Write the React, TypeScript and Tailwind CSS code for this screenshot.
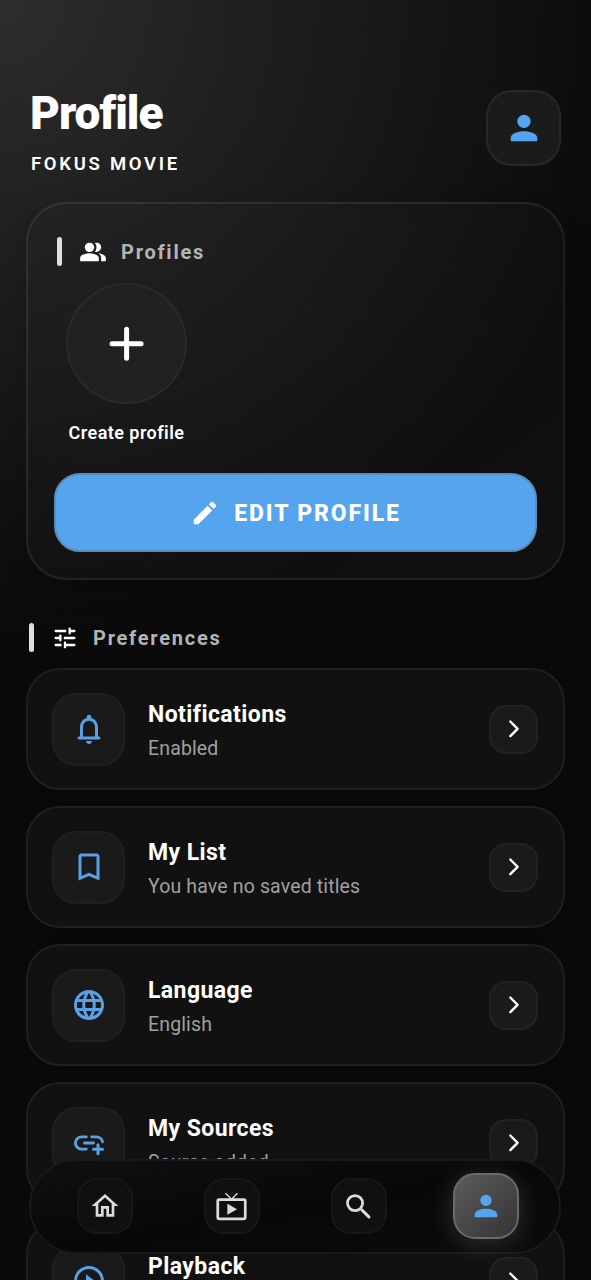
import type { ReactNode } from 'react'
import { MdLanguage, MdLiveTv, MdOutlineHome, MdPlayCircleOutline } from 'react-icons/md'

type IconProps = { className?: string }

function PersonIcon({ className }: IconProps) {
  return (
    <svg viewBox="0 0 24 24" fill="currentColor" className={className}>
      <path d="M12 12c2.21 0 4-1.79 4-4s-1.79-4-4-4-4 1.79-4 4 1.79 4 4 4zm0 2c-3.6 0-8 1.2-8 4.2v1.2c0 .33.27.6.6.6h14.8c.33 0 .6-.27.6-.6v-1.2c0-3-4.4-4.2-8-4.2z" />
    </svg>
  )
}

function PeopleIcon({ className }: IconProps) {
  return (
    <svg viewBox="0 0 24 24" fill="currentColor" className={className}>
      <circle cx="9" cy="8" r="4" />
      <path d="M9 13c-2.67 0-8 1.34-8 4v2.2c0 .44.36.8.8.8h14.4c.44 0 .8-.36.8-.8V17c0-2.66-5.33-4-8-4z" />
      <path d="M15 12c2.21 0 4-1.79 4-4s-1.79-4-4-4c-.47 0-.91.1-1.33.24C14.5 5.27 15 6.58 15 8s-.5 2.73-1.33 3.76c.42.14.86.24 1.33.24z" />
      <path d="M16.67 13.13C18.04 14.06 19 15.32 19 17v3h3.2c.44 0 .8-.36.8-.8V17c0-2.18-3.57-3.47-6.33-3.87z" />
    </svg>
  )
}

function EditIcon({ className }: IconProps) {
  return (
    <svg viewBox="0 0 24 24" fill="currentColor" className={className}>
      <path d="M3 17.46v3.04c0 .28.22.5.5.5h3.04c.13 0 .26-.05.35-.15L17.81 9.94l-3.75-3.75L3.15 17.1c-.1.1-.15.22-.15.36zM20.71 7.04a.996.996 0 0 0 0-1.41l-2.34-2.34a.996.996 0 0 0-1.41 0l-1.83 1.83 3.75 3.75 1.83-1.83z" />
    </svg>
  )
}

function TuneIcon({ className }: IconProps) {
  return (
    <svg viewBox="0 0 24 24" fill="currentColor" className={className}>
      <path d="M3 18c0 .55.45 1 1 1h5v-2H4c-.55 0-1 .45-1 1zM3 6c0 .55.45 1 1 1h9V5H4c-.55 0-1 .45-1 1zm10 14v-1h7c.55 0 1-.45 1-1s-.45-1-1-1h-7v-1c0-.55-.45-1-1-1s-1 .45-1 1v4c0 .55.45 1 1 1s1-.45 1-1zM7 10v1H4c-.55 0-1 .45-1 1s.45 1 1 1h3v1c0 .55.45 1 1 1s1-.45 1-1v-4c0-.55-.45-1-1-1s-1 .45-1 1zm14 2c0-.55-.45-1-1-1h-9v2h9c.55 0 1-.45 1-1zm-5-3c.55 0 1-.45 1-1V7h3c.55 0 1-.45 1-1s-.45-1-1-1h-3V4c0-.55-.45-1-1-1s-1 .45-1 1v4c0 .55.45 1 1 1z" />
    </svg>
  )
}

function BellIcon({ className }: IconProps) {
  return (
    <svg viewBox="0 0 24 24" fill="currentColor" className={className}>
      <path d="M18.6 17H18v-6c0-3.07-1.63-5.64-4.5-6.32V4c0-.83-.67-1.5-1.5-1.5s-1.5.67-1.5 1.5v.68C7.64 5.36 6 7.92 6 11v6h-.6c-1.33 0-1.33 2 0 2h13.2c1.33 0 1.33-2 0-2zM16 17H8v-6c0-2.48 1.51-4.5 4-4.5s4 2.02 4 4.5v6zm-4 5c1.1 0 2-.9 2-2h-4c0 1.1.89 2 2 2z" />
    </svg>
  )
}

function BookmarkIcon({ className }: IconProps) {
  return (
    <svg viewBox="0 0 24 24" fill="currentColor" className={className}>
      <path d="M17 3H7c-1.1 0-2 .9-2 2v16l7-3 7 3V5c0-1.1-.9-2-2-2zm0 15l-5-2.18L7 18V5h10v13z" />
    </svg>
  )
}

function AddLinkIcon({ className }: IconProps) {
  return (
    <svg viewBox="0 0 24 24" fill="none" stroke="currentColor" strokeWidth="1.9" strokeLinecap="round" className={className}>
      <path d="M10.2 7.95H7a4.05 4.05 0 0 0 0 8.1h3.2M13.8 7.95H17A4.05 4.05 0 0 1 21 11.2M9 12h6" />
      <path d="M18 13.2v6M15 16.1h6" strokeWidth="2" />
    </svg>
  )
}

function SearchIcon({ className }: IconProps) {
  return (
    <svg viewBox="0 0 24 24" fill="none" stroke="currentColor" strokeWidth="2" className={className}>
      <circle cx="9.5" cy="9.5" r="5.5" />
      <path d="M14.6 14.6l5 5" strokeWidth="2.2" strokeLinecap="round" />
    </svg>
  )
}

function ChevronIcon() {
  return (
    <svg viewBox="0 0 20 20" className="h-5 w-5" fill="none" stroke="#fff" strokeWidth="2.4" strokeLinecap="round" strokeLinejoin="round">
      <path d="M6.3 2.5l7.3 7.3-7.3 7.3" />
    </svg>
  )
}

function SectionTitle({ icon, children }: { icon: ReactNode; children: ReactNode }) {
  return (
    <div className="flex h-[30px] items-center">
      <span className="mb-px h-[29px] w-[5px] rounded-full bg-[#dedede]" />
      <span className="ml-[17px] text-white">{icon}</span>
      <h2 className="ml-[14px] text-[20px] leading-none font-bold tracking-[1.75px] text-[#b4b4b4]">{children}</h2>
    </div>
  )
}

const preferences = [
  { title: 'Notifications', subtitle: 'Enabled', icon: <BellIcon className="h-9 w-9" /> },
  { title: 'My List', subtitle: 'You have no saved titles', icon: <BookmarkIcon className="h-9 w-9" /> },
  { title: 'Language', subtitle: 'English', icon: <MdLanguage className="h-9 w-9" /> },
  { title: 'My Sources', subtitle: 'Source added', icon: <AddLinkIcon className="h-9 w-9" /> },
  { title: 'Playback', subtitle: '', icon: <MdPlayCircleOutline className="h-9 w-9" /> },
]

function PreferenceRow({ title, subtitle, icon }: (typeof preferences)[number]) {
  return (
    <button className="flex h-[122px] w-full shrink-0 items-center rounded-[34px] border-2 border-white/[0.06] bg-[#111111] pr-[25px] pl-6 text-left shadow-[0_6px_14px_rgba(0,0,0,0.2)]">
      <span className="flex h-[73px] w-[73px] items-center justify-center rounded-[24px] border-2 border-white/[0.025] bg-[#1a1a1a] text-[#5aa0e6]">
        {icon}
      </span>
      <span className="ml-[23px] flex flex-1 flex-col gap-[7px] pt-[5px]">
        <span className="text-[23px] leading-[27px] font-bold tracking-[0.42px] text-white">{title}</span>
        <span className="h-[27px] text-[19.5px] leading-[27px] tracking-[0.14px] text-[#a0a0a0]">{subtitle}</span>
      </span>
      <span className="flex h-[49px] w-[49px] items-center justify-center rounded-[17px] border-2 border-white/[0.04] bg-[#1a1a1a]">
        <ChevronIcon />
      </span>
    </button>
  )
}

function NavButton({ children }: { children: ReactNode }) {
  return (
    <div className="flex flex-1 justify-center">
      <button className="flex h-14 w-14 items-center justify-center rounded-[20px] border-2 border-white/[0.03] bg-[#101010] text-[#dcdcdc]">
        {children}
      </button>
    </div>
  )
}

export default function App() {
  return (
    <div className="relative h-[1280px] w-[591px] overflow-hidden bg-[#090909] bg-[radial-gradient(ellipse_640px_640px_at_0_0,#2d2d2d_0%,#1e1e1e_42%,#0a0a0a_100%)] font-[Roboto,sans-serif]">
      <header className="flex justify-between pt-[90px] pr-[30px] pl-[31px]">
        <div>
          <h1 className="-ml-px text-[46px] leading-[46px] font-black tracking-[-1px] text-white">Profile</h1>
          <p className="mt-[18px] text-[18.5px] leading-[20px] font-semibold tracking-[2.7px] text-white">FOKUS MOVIE</p>
        </div>
        <button className="flex h-[76px] w-[75px] items-center justify-center rounded-[26px] border-2 border-white/[0.06] bg-[#1b1b1b] text-[#55a4ee]">
          <PersonIcon className="h-10 w-10" />
        </button>
      </header>

      <section className="mx-[26px] mt-[28px] flex h-[378px] flex-col rounded-[40px] border-2 border-white/[0.07] bg-linear-to-br from-white/[0.01] to-white/[0.03] px-[26px] pt-[33px] shadow-[0_10px_24px_rgba(0,0,0,0.18)]">
        <div className="pl-[3px]">
          <SectionTitle icon={<PeopleIcon className="h-7 w-7" />}>Profiles</SectionTitle>
        </div>
        <div className="mt-4 ml-3 flex w-[121px] flex-col items-center">
          <button className="flex h-[121px] w-[121px] items-center justify-center rounded-full border-2 border-white/[0.04] bg-[#212121]">
            <svg viewBox="0 0 36 36" className="h-9 w-9" stroke="#fff" strokeWidth="5" strokeLinecap="round">
              <path d="M17.6 3.2v29M3.1 17.7h29" />
            </svg>
          </button>
          <span className="mt-[18px] text-[18px] leading-[21px] font-semibold tracking-[0.45px] whitespace-nowrap text-white">Create profile</span>
        </div>
        <button className="mt-[30px] flex h-[79px] items-center justify-center gap-[14px] rounded-[26px] border-2 border-[#5a8cbb] bg-[#54a4ee] text-white">
          <EditIcon className="h-[30px] w-[30px]" />
          <span className="pt-px text-[23px] leading-none font-extrabold tracking-[1.85px]">EDIT PROFILE</span>
        </button>
      </section>

      <section className="mx-[26px] mt-[43px]">
        <div className="pl-[3px]">
          <SectionTitle icon={<TuneIcon className="h-7 w-7" />}>Preferences</SectionTitle>
        </div>
        <div className="mt-[15px] flex flex-col gap-4">
          {preferences.map((item) => (
            <PreferenceRow key={item.title} {...item} />
          ))}
        </div>
      </section>

      {/* floating bottom navigation */}
      <nav className="absolute bottom-[26px] left-[29px] flex h-[95px] w-[532px] items-center rounded-[48px] border-2 border-[#16191d] bg-linear-to-br from-[#0f1012] via-[#080808] to-[#0b0b0c] px-[10px] pb-px">
        <NavButton>
          <MdOutlineHome className="h-8 w-8" />
        </NavButton>
        <NavButton>
          <MdLiveTv className="h-[33px] w-[33px]" />
        </NavButton>
        <NavButton>
          <SearchIcon className="h-[33px] w-[33px]" />
        </NavButton>
        <div className="flex flex-1 justify-center">
          <button className="flex h-[66px] w-[66px] items-center justify-center rounded-[22px] border-2 border-[#6a6a6a] bg-linear-to-br from-[#5c5c5c] to-[#343434] text-[#55a4ee] shadow-[0_4px_26px_rgba(255,255,255,0.16)]">
            <PersonIcon className="h-[34px] w-[34px]" />
          </button>
        </div>
      </nav>
    </div>
  )
}
